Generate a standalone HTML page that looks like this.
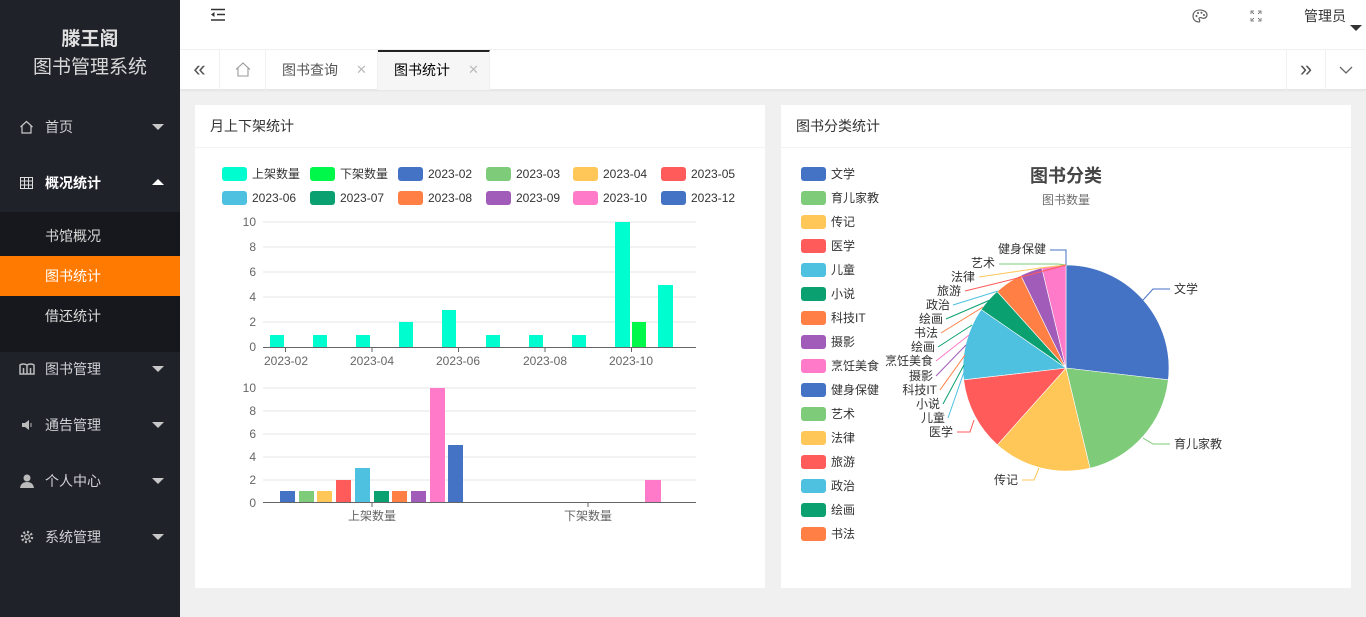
<!DOCTYPE html>
<html><head><meta charset="utf-8"><style>
*{margin:0;padding:0;box-sizing:border-box}
body{width:1366px;height:617px;overflow:hidden;background:#f0f0f0;font-family:"Liberation Sans","Noto Sans CJK SC",sans-serif;position:relative}
.side{position:absolute;left:0;top:0;width:180px;height:617px;background:#20222a;color:#c9c9cc}
.logo{height:100px;text-align:center;color:#ddd;padding-top:27px}
.logo b{display:block;font-size:19px;line-height:26px;color:#e0e0e0}
.logo span{display:block;font-size:19px;line-height:30px;color:#d8d8d8}
.mi{position:absolute;left:0;width:180px;height:56px;line-height:56px;font-size:14px;padding-left:45px;color:#d0d0d4}
.mi i{position:absolute;left:20px;top:21px;width:14px;height:14px}
.mi:after{content:"";position:absolute;right:16px;top:25px;border:6px solid transparent;border-top:6px solid #c8c8c8;border-bottom:0}
.mi.up:after{border-top:0;border-bottom:6px solid #fff;top:24px}
.sub{position:absolute;left:0;top:212px;width:180px;height:140px;background:#17181d}
.si{position:absolute;left:0;width:180px;height:40px;line-height:40px;padding-left:45px;font-size:14px;color:#d8d8d8}
.top{position:absolute;left:180px;top:0;right:0;height:50px;background:#fff;border-bottom:1px solid #f0f0f0}
.tabs{position:absolute;left:180px;top:50px;right:0;height:40px;background:#fff;border-bottom:1px solid #e6e6e6;box-shadow:0 1px 2px rgba(0,0,0,.05)}
.tab{position:absolute;top:0;height:40px;line-height:40px;font-size:14px;color:#555;border-right:1px solid #f0f0f0}
.card{position:absolute;background:#fff;top:105px;height:483px}
.ch{height:43px;line-height:43px;border-bottom:1px solid #f3f3f3;padding-left:15px;font-size:14px;color:#333}
svg text{font-family:"Liberation Sans","Noto Sans CJK SC",sans-serif}
</style></head><body>
<div class="side">
<div class="logo"><b>滕王阁</b><span>图书管理系统</span></div>
<div class="mi" style="top:99px"><svg style="position:absolute;left:19px;top:21px" width="15" height="14" viewBox="0 0 15 14"><path d="M1.5 7 L7.5 1.5 L13.5 7 M3 5.8 V13 H12 V5.8" fill="none" stroke="#c8c8c8" stroke-width="1.2"/></svg>首页</div>
<div class="mi up" style="top:155px;color:#fff;font-weight:bold"><svg style="position:absolute;left:20px;top:22px" width="13" height="12"><rect x=".5" y=".5" width="12" height="11" fill="none" stroke="#ddd"/><path d="M0 4h13M0 8h13M4.5 0v12M8.5 0v12" stroke="#ddd"/></svg>概况统计</div>
<div class="sub">
<div class="si" style="top:4px">书馆概况</div>
<div class="si" style="top:44px;background:#ff7a00;color:#fff">图书统计</div>
<div class="si" style="top:84px">借还统计</div>
</div>
<div class="mi" style="top:341px"><svg style="position:absolute;left:19px;top:22px" width="16" height="12"><path d="M1 2 Q4 0 8 2 Q12 0 15 2 V11 H1Z M8 2V11 M4.5 5v6 M11.5 5v6" fill="none" stroke="#bbb" stroke-width="1.5"/></svg>图书管理</div>
<div class="mi" style="top:397px"><svg style="position:absolute;left:21px;top:22px" width="12" height="12"><path d="M1 4h3l4-3v10L4 8H1z" fill="#bbb"/><path d="M10 4v4" stroke="#bbb"/></svg>通告管理</div>
<div class="mi" style="top:453px"><svg style="position:absolute;left:20px;top:21px" width="14" height="14"><circle cx="7" cy="4" r="3.5" fill="#bbb"/><path d="M0 14 Q1 8 7 8 Q13 8 14 14z" fill="#bbb"/></svg>个人中心</div>
<div class="mi" style="top:509px"><svg style="position:absolute;left:20px;top:21px" width="14" height="14"><circle cx="7" cy="7" r="5" fill="none" stroke="#bbb" stroke-width="2.4" stroke-dasharray="2 1.9"/><circle cx="7" cy="7" r="2.3" fill="none" stroke="#bbb" stroke-width="1.3"/></svg>系统管理</div>
</div>

<div class="top">
<svg style="position:absolute;left:30px;top:8px" width="16" height="14"><path d="M1 1.5h14M7 6.5h8M1 12h14" stroke="#333" stroke-width="1.4"/><path d="M1 6.5 L4.5 4 V9z" fill="#333"/></svg>
<svg style="position:absolute;left:1012px;top:9px" width="16" height="14"><path d="M8 1 C2 1 1 5 1 7 C1 11 4 13 7 13 C8 13 8 11 7 10 C6.5 9 8 8 10 9 C13 10 15 8 15 6 C15 3 12 1 8 1Z" fill="none" stroke="#555" stroke-width="1.1"/><circle cx="4.5" cy="7" r="1" fill="#555"/><circle cx="6" cy="4" r="1" fill="#555"/><circle cx="9.5" cy="3.8" r="1" fill="#555"/><circle cx="12" cy="6" r="1" fill="#555"/></svg>
<svg style="position:absolute;left:1070px;top:10px" width="12" height="12"><path d="M1 4V1h3M8 1h3v3M11 8v3H8M4 11H1V8 M1 1l3 3M11 1L8 4M11 11L8 8M1 11l3-3" fill="none" stroke="#888" stroke-width="1"/></svg>
<div style="position:absolute;left:1124px;top:6px;font-size:14px;color:#333">管理员</div>
<div style="position:absolute;left:1170px;top:25px;border:6px solid transparent;border-top:6px solid #333;border-bottom:0"></div>
</div>

<div class="tabs">
<div class="tab" style="left:0;width:40px;text-align:center;font-size:22px;color:#555;line-height:38px">«</div>
<div class="tab" style="left:40px;width:46px"><svg style="position:absolute;left:15px;top:12px" width="16" height="15"><path d="M1 7.5 L8 1 L15 7.5 M3 6 V14 H13 V6" fill="none" stroke="#999" stroke-width="1.1"/></svg></div>
<div class="tab" style="left:86px;width:112px;padding-left:16px">图书查询<span style="position:absolute;left:90px;color:#bbb;font-size:13px">✕</span></div>
<div class="tab" style="left:198px;width:112px;padding-left:16px;background:#f6f6f6;color:#000;border-top:2px solid #222;line-height:36px">图书统计<span style="position:absolute;left:90px;color:#bbb;font-size:13px">✕</span></div>
<div class="tab" style="left:1106px;width:40px;text-align:center;font-size:22px;line-height:38px;border-left:1px solid #f0f0f0">»</div>
<div class="tab" style="left:1146px;width:40px;border-right:0"><svg style="position:absolute;left:13px;top:16px" width="14" height="8"><path d="M1 1l6 6 6-6" fill="none" stroke="#666" stroke-width="1.3"/></svg></div>
</div>

<div class="card" style="left:195px;width:570px"><div class="ch">月上下架统计</div></div>
<div class="card" style="left:781px;width:570px"><div class="ch">图书分类统计</div></div>

<svg style="position:absolute;left:0;top:0" width="1366" height="617" font-size="12">
<!-- legend left -->
<g fill="#333">
<rect x="222" y="167" width="25" height="14" rx="3" fill="#00fdd0"/><text x="252" y="178">上架数量</text>
<rect x="310" y="167" width="25" height="14" rx="3" fill="#00f84a"/><text x="340" y="178">下架数量</text>
<rect x="398" y="167" width="25" height="14" rx="3" fill="#4472c4"/><text x="428" y="178">2023-02</text>
<rect x="486" y="167" width="25" height="14" rx="3" fill="#7ecb7a"/><text x="516" y="178">2023-03</text>
<rect x="573" y="167" width="25" height="14" rx="3" fill="#ffc658"/><text x="603" y="178">2023-04</text>
<rect x="661" y="167" width="25" height="14" rx="3" fill="#ff5b5b"/><text x="691" y="178">2023-05</text>
<rect x="222" y="191" width="25" height="14" rx="3" fill="#4ec0e0"/><text x="252" y="202">2023-06</text>
<rect x="310" y="191" width="25" height="14" rx="3" fill="#0aa070"/><text x="340" y="202">2023-07</text>
<rect x="398" y="191" width="25" height="14" rx="3" fill="#ff7f45"/><text x="428" y="202">2023-08</text>
<rect x="486" y="191" width="25" height="14" rx="3" fill="#a05cb8"/><text x="516" y="202">2023-09</text>
<rect x="573" y="191" width="25" height="14" rx="3" fill="#ff7ac8"/><text x="603" y="202">2023-10</text>
<rect x="661" y="191" width="25" height="14" rx="3" fill="#4472c4"/><text x="691" y="202">2023-12</text>
</g>
<!-- chart 1 -->
<g stroke="#e6e6e6"><path d="M263 222H696M263 247H696M263 272H696M263 297H696M263 322H696"/></g>
<g fill="#666" text-anchor="end"><text x="256" y="226">10</text><text x="256" y="251">8</text><text x="256" y="276">6</text><text x="256" y="301">4</text><text x="256" y="326">2</text><text x="256" y="351">0</text></g>
<path d="M263 347.5H696M285.5 347v5M372 347v5M458.5 347v5M545 347v5M631.5 347v5" stroke="#666"/>
<g fill="#666" text-anchor="middle"><text x="286" y="365">2023-02</text><text x="372" y="365">2023-04</text><text x="458" y="365">2023-06</text><text x="545" y="365">2023-08</text><text x="631" y="365">2023-10</text></g>
<g fill="#00fdd0"><rect x="270" y="335" width="14" height="12"/><rect x="313" y="335" width="14" height="12"/><rect x="356" y="335" width="14" height="12"/><rect x="399" y="322" width="14" height="25"/><rect x="442" y="310" width="14" height="37"/><rect x="486" y="335" width="14" height="12"/><rect x="529" y="335" width="14" height="12"/><rect x="572" y="335" width="14" height="12"/><rect x="615" y="222" width="15" height="125"/><rect x="658" y="285" width="15" height="62"/></g>
<rect x="632" y="322" width="14" height="25" fill="#00f84a"/>
<!-- chart 2 -->
<g stroke="#e6e6e6"><path d="M263 388H696M263 411H696M263 434H696M263 457H696M263 480H696"/></g>
<g fill="#666" text-anchor="end"><text x="256" y="392">10</text><text x="256" y="415">8</text><text x="256" y="438">6</text><text x="256" y="461">4</text><text x="256" y="484">2</text><text x="256" y="507">0</text></g>
<path d="M263 502.5H696M372 502v5M588 502v5" stroke="#666"/>
<g fill="#666" text-anchor="middle"><text x="372" y="520">上架数量</text><text x="588" y="520">下架数量</text></g>
<rect x="280" y="491" width="15" height="11" fill="#4472c4"/>
<rect x="299" y="491" width="15" height="11" fill="#7ecb7a"/>
<rect x="317" y="491" width="15" height="11" fill="#ffc658"/>
<rect x="336" y="480" width="15" height="22" fill="#ff5b5b"/>
<rect x="355" y="468" width="15" height="34" fill="#4ec0e0"/>
<rect x="374" y="491" width="15" height="11" fill="#0aa070"/>
<rect x="392" y="491" width="15" height="11" fill="#ff7f45"/>
<rect x="411" y="491" width="15" height="11" fill="#a05cb8"/>
<rect x="430" y="388" width="15" height="114" fill="#ff7ac8"/>
<rect x="448" y="445" width="15" height="57" fill="#4472c4"/>
<rect x="645" y="480" width="16" height="22" fill="#ff7ac8"/>
<!-- right legend -->
<g fill="#333">
<rect x="801" y="167" width="25" height="14" rx="3" fill="#4472c4"/><text x="831" y="178">文学</text>
<rect x="801" y="191" width="25" height="14" rx="3" fill="#7ecb7a"/><text x="831" y="202">育儿家教</text>
<rect x="801" y="215" width="25" height="14" rx="3" fill="#ffc658"/><text x="831" y="226">传记</text>
<rect x="801" y="239" width="25" height="14" rx="3" fill="#ff5b5b"/><text x="831" y="250">医学</text>
<rect x="801" y="263" width="25" height="14" rx="3" fill="#4ec0e0"/><text x="831" y="274">儿童</text>
<rect x="801" y="287" width="25" height="14" rx="3" fill="#0aa070"/><text x="831" y="298">小说</text>
<rect x="801" y="311" width="25" height="14" rx="3" fill="#ff7f45"/><text x="831" y="322">科技IT</text>
<rect x="801" y="335" width="25" height="14" rx="3" fill="#a05cb8"/><text x="831" y="346">摄影</text>
<rect x="801" y="359" width="25" height="14" rx="3" fill="#ff7ac8"/><text x="831" y="370">烹饪美食</text>
<rect x="801" y="383" width="25" height="14" rx="3" fill="#4472c4"/><text x="831" y="394">健身保健</text>
<rect x="801" y="407" width="25" height="14" rx="3" fill="#7ecb7a"/><text x="831" y="418">艺术</text>
<rect x="801" y="431" width="25" height="14" rx="3" fill="#ffc658"/><text x="831" y="442">法律</text>
<rect x="801" y="455" width="25" height="14" rx="3" fill="#ff5b5b"/><text x="831" y="466">旅游</text>
<rect x="801" y="479" width="25" height="14" rx="3" fill="#4ec0e0"/><text x="831" y="490">政治</text>
<rect x="801" y="503" width="25" height="14" rx="3" fill="#0aa070"/><text x="831" y="514">绘画</text>
<rect x="801" y="527" width="25" height="14" rx="3" fill="#ff7f45"/><text x="831" y="538">书法</text>
</g>
<text x="1066" y="182" text-anchor="middle" font-size="18" font-weight="bold" fill="#464646">图书分类</text>
<text x="1066" y="204" text-anchor="middle" fill="#6e6e6e">图书数量</text>
<!-- pie -->
<g stroke="#fff" stroke-width="0.6" stroke-linejoin="round">
<path d="M1066 368L1066 265A103 103 0 0 1 1168.3 379.8Z" fill="#4472c4"/>
<path d="M1066 368L1168.3 379.8A103 103 0 0 1 1090 468.2Z" fill="#7ecb7a"/>
<path d="M1066 368L1090 468.2A103 103 0 0 1 997.4 444.8Z" fill="#ffc658"/>
<path d="M1066 368L997.4 444.8A103 103 0 0 1 963.7 379.8Z" fill="#ff5b5b"/>
<path d="M1066 368L963.7 379.8A103 103 0 0 1 981.2 309.5Z" fill="#4ec0e0"/>
<path d="M1066 368L981.2 309.5A103 103 0 0 1 997.1 291.5Z" fill="#0aa070"/>
<path d="M1066 368L997.1 291.5A103 103 0 0 1 1020.8 275.4Z" fill="#ff7f45"/>
<path d="M1066 368L1020.8 275.4A103 103 0 0 1 1041.8 267.9Z" fill="#a05cb8"/>
<path d="M1066 368L1041.8 267.9A103 103 0 0 1 1066 265Z" fill="#ff7ac8"/>
</g>
<g fill="none" stroke-width="1">
<path d="M1143 300L1153 289H1170" stroke="#4472c4"/>
<path d="M1143 438L1153 444H1170" stroke="#7ecb7a"/>
<path d="M1039 468L1034 480H1022" stroke="#ffc658"/>
<path d="M974 420L970 432H957" stroke="#ff5b5b"/>
<path d="M1066 265V250H1050" stroke="#4472c4"/>
<path d="M1066 265L1058 264H999" stroke="#7ecb7a"/>
<path d="M1066 265L1040 268L979 277" stroke="#ffc658"/>
<path d="M1066 265L1010 280L965 291" stroke="#ff5b5b"/>
<path d="M998 291L953 305" stroke="#4ec0e0"/>
<path d="M990 300L946 319" stroke="#0aa070"/>
<path d="M983 307L941 333" stroke="#ff7f45"/>
<path d="M972 325L938 347" stroke="#0aa070"/>
<path d="M969 335L936 361" stroke="#ff7ac8"/>
<path d="M966 345L936 376" stroke="#a05cb8"/>
<path d="M965 355L940 390" stroke="#ff7f45"/>
<path d="M964 365L943 404" stroke="#0aa070"/>
<path d="M964 372L948 418" stroke="#4ec0e0"/>
</g>
<g fill="#333" font-size="12">
<text x="1174" y="293">文学</text>
<text x="1174" y="448">育儿家教</text>
<text x="1018" y="484" text-anchor="end">传记</text>
<text x="953" y="436" text-anchor="end">医学</text>
<text x="1046" y="253" text-anchor="end">健身保健</text>
<text x="995" y="267" text-anchor="end">艺术</text>
<text x="975" y="281" text-anchor="end">法律</text>
<text x="961" y="295" text-anchor="end">旅游</text>
<text x="950" y="309" text-anchor="end">政治</text>
<text x="943" y="323" text-anchor="end">绘画</text>
<text x="938" y="337" text-anchor="end">书法</text>
<text x="935" y="351" text-anchor="end">绘画</text>
<text x="933" y="365" text-anchor="end">烹饪美食</text>
<text x="933" y="380" text-anchor="end">摄影</text>
<text x="937" y="394" text-anchor="end">科技IT</text>
<text x="940" y="408" text-anchor="end">小说</text>
<text x="945" y="422" text-anchor="end">儿童</text>
</g>
</svg>
</body></html>
